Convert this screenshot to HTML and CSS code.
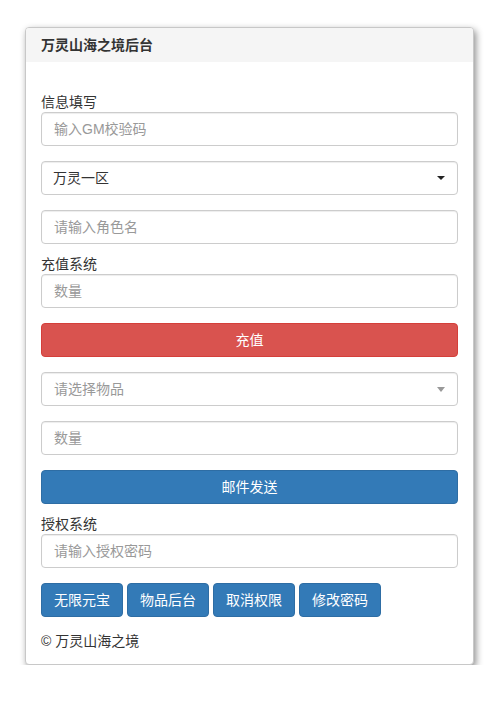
FILE: index.html
```html
<!DOCTYPE html>
<html lang="zh-CN">
<head>
<meta charset="utf-8">
<title>万灵山海之境后台</title>
<link rel="stylesheet" href="styles.css">
</head>
<body>
<div class="panel">
  <div class="panel-heading">万灵山海之境后台</div>
  <div class="panel-body">
    <div class="group first">
      <label class="label">信息填写</label>
      <input class="control" type="text" placeholder="输入GM校验码">
    </div>
    <div class="group select-wrap dark">
      <select class="control select">
        <option>万灵一区</option>
      </select>
    </div>
    <div class="group">
      <input class="control" type="text" placeholder="请输入角色名">
    </div>
    <div class="group tight">
      <label class="label">充值系统</label>
      <input class="control" type="text" placeholder="数量">
    </div>
    <div class="group">
      <button class="btn btn-danger btn-block">充值</button>
    </div>
    <div class="group select-wrap light">
      <div class="control fake-select">请选择物品</div>
    </div>
    <div class="group">
      <input class="control" type="text" placeholder="数量">
    </div>
    <div class="group">
      <button class="btn btn-primary btn-block">邮件发送</button>
    </div>
    <div class="group tight">
      <label class="label">授权系统</label>
      <input class="control" type="password" placeholder="请输入授权密码">
    </div>
    <div class="group btn-row">
      <button class="btn btn-primary">无限元宝</button>
      <button class="btn btn-primary">物品后台</button>
      <button class="btn btn-primary">取消权限</button>
      <button class="btn btn-primary">修改密码</button>
    </div>
    <div class="footer">© 万灵山海之境</div>
  </div>
</div>
</body>
</html>
```

FILE: styles.css
```css
* { box-sizing: border-box; }

html, body {
  margin: 0;
  padding: 0;
  background: #fff;
}

body {
  font-family: "Liberation Sans", "Noto Sans CJK SC", sans-serif;
  font-size: 14px;
  line-height: 20px;
  color: #333;
}

.panel {
  width: 449px;
  margin: 27px 0 0 25px;
  border: 1px solid #c8c8c8;
  border-radius: 4px;
  background: #fff;
  box-shadow: 2px 3px 7px rgba(0, 0, 0, 0.45);
}

.panel-heading {
  background: #f5f5f5;
  padding: 7px 15px 7px 15px;
  font-weight: bold;
  font-size: 14px;
  line-height: 20px;
  color: #333;
  border-radius: 3px 3px 0 0;
}

.panel-body {
  padding: 15px 15px 13px 15px;
  display: flex;
  flex-direction: column;
}

.group {
  margin-top: 15px;
}

.group.tight {
  margin-top: 10px;
}

.label {
  display: block;
  font-size: 14px;
  line-height: 20px;
  color: #333;
}

.control {
  display: block;
  width: 100%;
  height: 34px;
  padding: 6px 12px;
  font-family: inherit;
  font-size: 14px;
  line-height: 20px;
  color: #333;
  background: #fff;
  border: 1px solid #ccc;
  border-radius: 4px;
  box-shadow: inset 0 1px 1px rgba(0, 0, 0, 0.075);
  outline: none;
}

.control::placeholder {
  color: #999;
  opacity: 1;
}

.select {
  -webkit-appearance: none;
  appearance: none;
  padding-left: 11px;
}

.fake-select {
  color: #999;
}

.select-wrap {
  position: relative;
}

.select-wrap::after {
  content: "";
  position: absolute;
  top: 15px;
  right: 13px;
  width: 0;
  height: 0;
  border-style: solid;
  pointer-events: none;
}

.select-wrap.dark::after {
  border-width: 4px 4px 0 4px;
  border-color: #222 transparent transparent transparent;
}

.select-wrap.light::after {
  top: 15px;
  border-width: 5px 4px 0 4px;
  border-color: #999 transparent transparent transparent;
}

.btn {
  display: inline-block;
  height: 34px;
  padding: 6px 12px;
  font-family: inherit;
  font-size: 14px;
  line-height: 20px;
  color: #fff;
  border: 1px solid transparent;
  border-radius: 4px;
  cursor: pointer;
  text-align: center;
}

.btn-block {
  display: block;
  width: 100%;
}

.btn-danger {
  background: #d9534f;
  border-color: #d43f3a;
}

.btn-primary {
  background: #337ab7;
  border-color: #2e6da4;
}

.btn-row {
  display: flex;
  gap: 4px;
}

.footer {
  margin-top: 14px;
  font-size: 14px;
  line-height: 20px;
  color: #333;
}
```
